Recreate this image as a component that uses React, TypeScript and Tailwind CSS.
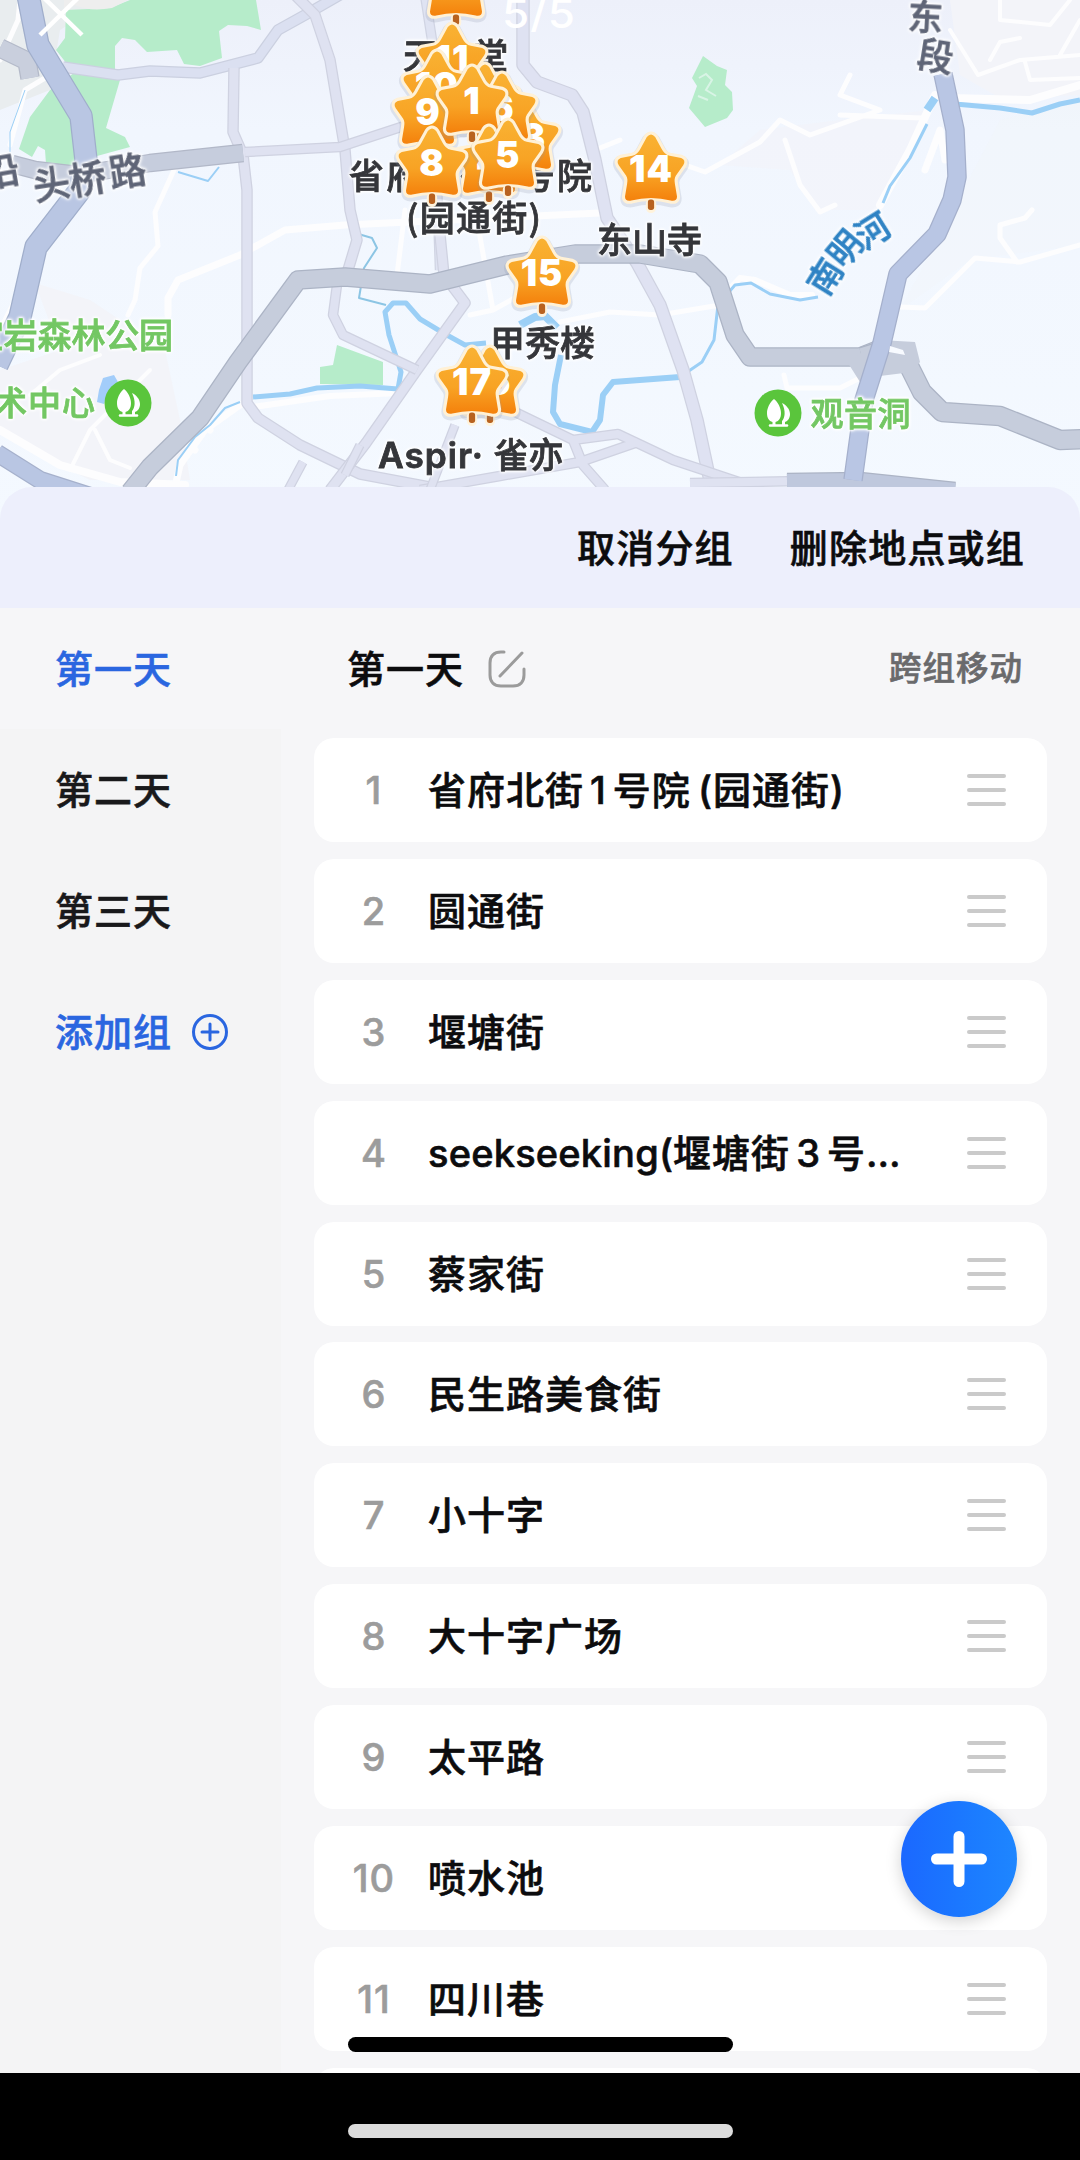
import { useState } from "react";

const days = ["第一天", "第二天", "第三天"];

const places = [
  "省府北街1号院 (园通街)",
  "圆通街",
  "堰塘街",
  "seekseeking(堰塘街3号院店)",
  "蔡家街",
  "民生路美食街",
  "小十字",
  "大十字广场",
  "太平路",
  "喷水池",
  "四川巷",
  "六广门",
];

// drawn back to front
const pins = [
  { n: 12, x: 456, y: -51 },
  { n: 11, x: 452, y: 24 },
  { n: 10, x: 437, y: 51 },
  { n: 13, x: 525, y: 102 },
  { n: 2, x: 485, y: 64 },
  { n: 6, x: 502, y: 73 },
  { n: 9, x: 428, y: 77 },
  { n: 1, x: 472, y: 66 },
  { n: 4, x: 489, y: 126 },
  { n: 5, x: 508, y: 120 },
  { n: 8, x: 432, y: 128 },
  { n: 14, x: 651, y: 134 },
  { n: 15, x: 542, y: 238 },
  { n: 16, x: 490, y: 347 },
  { n: 17, x: 472, y: 347 },
];

const STAR =
  "M-4 3Q0-2 4 3L10 14Q13 20 18 21L29 23Q34 25 31 30L24 40Q22 43 23 48L25 60Q25 65 19 64Q0 59 -19 64Q-25 65 -25 60L-23 48Q-22 43 -24 40L-31 30Q-34 25 -29 23L-18 21Q-13 20 -10 14Z";

function Pin({ n, x, y }: { n: number; x: number; y: number }) {
  return (
    <g transform={`translate(${x} ${y}) scale(1.04)`}>
      <path d={STAR} fill="#8a93a8" opacity="0.2" transform="translate(0 2)" stroke="#8a93a8" strokeWidth="9" />
      <rect x="-5" y="62" width="10" height="14" rx="5" fill="#fff3dc" />
      <path d={STAR} fill="#fff1d6" stroke="#fff1d6" strokeWidth="6" strokeLinejoin="round" />
      <path d={STAR} fill="url(#pin)" />
      <rect x="-3" y="63" width="6" height="10" rx="2.5" fill="#b8621f" />
      <text
        x="0"
        y="46"
        textAnchor="middle"
        fill="#fff"
        fontSize="35"
        fontWeight="900"
        fontFamily="Inter, sans-serif"
      >
        {n}
      </text>
    </g>
  );
}

const halo =
  "[filter:drop-shadow(0_0_1px_#fff)_drop-shadow(0_0_1px_#fff)_drop-shadow(0_0_1.5px_#fff)]";

type LabelProps = {
  x: number;
  y: number;
  w?: number;
  size?: number;
  rotate?: number;
  fill?: string;
  latin?: boolean;
  children: string;
};

function Label({ x, y, w, size = 35, rotate = 0, fill = "#35363a", latin, children }: LabelProps) {
  return (
    <text
      className={halo}
      transform={`translate(${x} ${y}) rotate(${rotate})`}
      y={size * 0.37}
      textAnchor="middle"
      textLength={w}
      lengthAdjust={latin ? "spacingAndGlyphs" : "spacing"}
      fontFamily={latin ? "Inter, sans-serif" : undefined}
      fontSize={size}
      fontWeight={latin ? "600" : "500"}
      fill={fill}
      stroke={fill}
      strokeWidth="0.8"
    >
      {children}
    </text>
  );
}

function Road({ d, w, fill, edge }: { d: string; w: number; fill: string; edge: string }) {
  return (
    <g fill="none" strokeLinejoin="round">
      <path d={d} stroke={edge} strokeWidth={w + 1.5} />
      <path d={d} stroke={fill} strokeWidth={w - 1} />
    </g>
  );
}

function ParkIcon({ x, y }: { x: number; y: number }) {
  return (
    <g transform={`translate(${x} ${y})`}>
      <circle r="23.5" fill="#5ac53c" />
      <path
        d="M-4-14C-8-11-11-5-11 0C-11 5-9 8-5.500 9V12H-2.500V9C1 8 3 5 3 0C3-5 0-11-4-14Z"
        fill="#fff"
      />
      <path d="M4-10C8-8 12-4 12 1C12 5 10 8 7 9V12H4V8C7 5 8-2 4-10Z" fill="#fff" />
      <path d="M-8 12.500H9" stroke="#fff" strokeWidth="2.500" strokeLinecap="round" />
    </g>
  );
}

function MapView() {
  return (
    <svg
      viewBox="0 0 1080 520"
      className="block h-[520px] w-[1080px] font-['Noto_Sans_CJK_SC',sans-serif]"
    >
      <defs>
        <linearGradient id="pin" x1="0" y1="0" x2="0" y2="1">
          <stop offset="0" stopColor="#f9b233" />
          <stop offset="0.6" stopColor="#f8a324" />
          <stop offset="1" stopColor="#f4810c" />
        </linearGradient>
        <linearGradient id="land" x1="0" y1="0" x2="0" y2="1">
          <stop offset="0" stopColor="#edf0fa" />
          <stop offset="0.25" stopColor="#f1f6fe" />
          <stop offset="1" stopColor="#f4f9ff" />
        </linearGradient>
      </defs>
      <rect width="1080" height="520" fill="url(#land)" />

      {/* hills */}
      <g fill="#f3f4f9">
        <path d="M0 0H110L60 30L50 90L0 110Z" fill="#e9edef" />
        <path d="M35 283L90 300L165 350L180 420L190 480H90L30 450L0 430V370L60 350Z" />
        <path d="M950 0H1080V95L1000 98L960 75Z" />
        <path d="M720 165L760 130L840 120L930 110L880 210L815 210L790 170Z" opacity="0.6" />
        <path d="M900 310L970 260L1080 245V100L1000 120Z" opacity="0.3" />
      </g>

      {/* parks */}
      <g fill="#b6ecca">
        <path d="M66 10L110 8L130 0H256L261 30L247 26L228 25L219 31L222 58L200 66L184 64L177 50L147 52L135 40L122 38L115 46V70L120 80L106 128L125 137L130 147L97 156L63 174L46 164L45 150L38 146L32 157L19 149L30 117L50 90L74 73L56 50L65 38Z" />
        <path d="M320 384V367L333 365L337 345L383 362V385Z" />
        <path d="M703 56L692 78L697 86L689 108L705 127L727 118L733 110L732 92L725 85L727 70L717 66Z" />
      </g>
      <path d="M699 78L706 74L712 80L706 90L716 96M698 96L708 100" fill="none" stroke="#d9f4e6" strokeWidth="2" />
      <path d="M64 10L75 5Q90 12 112 8L132 -2H64Z" fill="#eeeeee" />

      {/* lanes */}
      <g fill="none" stroke="#fdfdfe" strokeWidth="5" strokeLinejoin="round" strokeLinecap="round">
        <path d="M174 170L155 212L158 246L140 268L135 300L128 315" />
        <path d="M168 315V298L178 280L240 255L285 230L345 225L600 213" strokeWidth="7" />
        <path d="M0 430L60 465L120 482L185 485" strokeWidth="8" />
        <path d="M30 395L60 370L100 355M70 470L90 430L150 370M95 430L110 460L130 468" strokeWidth="4" />
        <path d="M240 405L205 430L180 465L175 487M195 415L210 430M183 440L195 450" strokeWidth="7" />
        <path d="M253 407L330 396L400 393" strokeWidth="6" />
        <path d="M0 330L30 270M10 145L25 90L50 75" />
        <path d="M405 210L397 275M477 220L493 310L470 315M493 310L520 295" />
        <path d="M560 322L610 312L660 315L720 305" />
        <path d="M595 150L620 140M685 165L705 172L760 142L780 120L810 135L880 110L840 95L850 75M785 140L800 185L820 212L835 205M840 115L922 118" />
        <path d="M880 205L910 150L935 95L950 98L1030 100L1080 85" strokeWidth="8" />
        <path d="M925 170L940 130L945 160" strokeWidth="7" />
        <path d="M900 307L925 308L975 258L1020 262L1080 245M1017 262L1000 238V225L1025 218L1032 210" />
        <path d="M727 292L740 278L755 280L790 295L812 295" strokeWidth="6" />
        <path d="M784 375L787 388L840 388L860 378" />
        <path d="M1000 0V20L1050 25L1070 0M950 30L978 75L1020 60L1080 55M1080 20L1060 55M990 60L1000 42L1020 38M1025 62L1030 80L1080 78" strokeWidth="4" />
        <path d="M0 60L18 20L20 0" />
      </g>

      {/* rivers */}
      <g fill="none" stroke="#9bcff6" strokeWidth="5" strokeLinejoin="round">
        <path d="M253 397L290 394L317 388L360 386L398 389L401 372L389 335L385 312L393 303H406L420 319L445 334L465 345L486 343" />
        <path d="M520 325L535 317L545 316L557 328" strokeWidth="8" />
        <path d="M561 355L555 385L553 412L560 424L592 432L600 420L603 395L613 382L680 377" strokeWidth="6" />
        <path d="M680 377L702 362L714 340L718 305L735 285L751 283L770 294L800 300L818 297" strokeWidth="3" />
        <path d="M883 203L890 186L910 158L927 124" strokeWidth="3" />
        <path d="M927 110L935 98" strokeWidth="8" />
        <path d="M955 104L1000 108L1032 113L1060 104L1080 100" strokeWidth="5" />
        <path d="M355 233L372 238L377 248L364 268L359 298L386 305" strokeWidth="2" stroke="#8cc5e4" />
        <path d="M178 172L208 181L219 167" strokeWidth="2" />
        <path d="M240 402L225 408L210 425L195 437L178 460L176 476" strokeWidth="2" />
        <path d="M10 152V132L25 90" strokeWidth="1" />
      </g>
      <path d="M97 402L99 390L103 378L114 375L118 382L108 392L104 404Z" fill="#a3cdfa" />

      {/* minor roads */}
      <Road d="M63 67L118 75L150 71L200 73L258 58L278 30L305 15L345 -8" w={10} fill="#dbe0f1" edge="#cbd0e0" />
      <Road d="M296 -4L315 15L330 60L345 150L350 210L357 240L348 270" w={10} fill="#dfe2f1" edge="#cfd2e1" />
      <Road d="M234 68L233 132L243 155L247 190V403L258 418L300 445L360 474L440 489" w={10} fill="#dfe2f1" edge="#cfd2e1" />
      <Road d="M245 152L340 147L404 126" w={9} fill="#dfe2f1" edge="#cfd2e1" />
      <Road d="M425 -5L432 40L440 270" w={9} fill="#dfe3f2" edge="#d0d4e3" />
      <Road d="M523 -5V65L537 82L572 95L583 112L595 160L607 218L637 263L660 305L683 370L697 420L712 490" w={12} fill="#dfe2f2" edge="#cfd2e1" />
      <Road d="M440 235L444 275L465 303L417 370L366 443L330 490" w={10} fill="#dfe2f1" edge="#cfd2e1" />
      <Road d="M337 285L333 315L343 335L417 370" w={9} fill="#dfe2f1" edge="#cfd2e1" />
      <Road d="M515 412L573 440L583 465L605 490M573 440L618 434L673 460L745 484M420 490L500 476L580 462L638 442" w={9} fill="#dfe2f1" edge="#cfd2e1" />
      <Road d="M455 425L430 490M303 462L288 490M360 445L345 475" w={8} fill="#dfe2f1" edge="#cfd2e1" />
      <Road d="M690 483L800 481" w={9} fill="#dfe2f1" edge="#cfd2e1" />

      {/* main roads */}
      <Road d="M0 48L27 61L30 78" w={18} fill="#c9cfdd" edge="#b4bac9" />
      <Road d="M12 164L35 170L78 175L150 163L243 153" w={17} fill="#c6cddd" edge="#b2b8c8" />
      <Road d="M130 492L150 467L200 418L238 362L298 280L345 277L430 284L507 265L575 254L640 254L700 264L718 282L735 335L750 357H860L885 347" w={18} fill="#c6cddc" edge="#acb4c5" />
      <Road d="M862 357L885 350L905 358L922 392L942 412L1000 416L1060 440L1085 439" w={19} fill="#c6cddc" edge="#acb4c5" />
      <path d="M848 363L880 340L915 342L920 362L912 372L880 376L860 382Z" fill="#c6cddc" />
      <Road d="M787 481L860 480L955 490" w={15} fill="#bfc8dd" edge="#acb4c5" />
      <Road d="M28 -5L38 45L81 116L86 160L80 190L36 247L20 317L-3 365" w={22} fill="#b9c6e3" edge="#a0aecb" />
      <Road d="M-3 453L40 480L90 496" w={17} fill="#b9c6e3" edge="#a6b1cc" />
      <Road d="M943 74L955 130L957 177L952 200L937 234L898 274L882 343L864 400L853 480" w={18} fill="#b9c6e4" edge="#a5b0cc" />
      <path d="M890 346L903 350L905 355L889 352Z" fill="#f7faff" />

      <Label x={2} y={172} size={36} rotate={-10} fill="#5f6577">沿</Label>
      <Label x={52} y={184} size={37} rotate={-9} fill="#5f6577">头</Label>
      <Label x={88} y={179} size={37} rotate={-9} fill="#5f6577">桥</Label>
      <Label x={128} y={171} size={37} rotate={-9} fill="#5f6577">路</Label>
      <Label x={926} y={17} size={35} rotate={3} fill="#5f6577">东</Label>
      <Label x={936} y={57} size={36} rotate={9} fill="#5f6577">段</Label>
      <Label x={825} y={276} size={34} rotate={-58} fill="#2f83c4">南</Label>
      <Label x={845} y={248} size={34} rotate={-50} fill="#2f83c4">明</Label>
      <Label x={873} y={230} size={34} rotate={-32} fill="#2f83c4">河</Label>

      <Label x={72} y={335} w={204} size={34} fill="#73c763">宝岩森林公园</Label>
      <Label x={45} y={403} w={102} size={33} fill="#73c763">术中心</Label>
      <ParkIcon x={128} y={403} />
      <ParkIcon x={778} y={413} />
      <Label x={861} y={414} w={101} size={33} fill="#73c763">观音洞</Label>

      <Label x={456} y={56} w={106}>天主堂</Label>
      <Label x={471} y={176} w={244}>省府北街1号院</Label>
      <Label x={474} y={218} w={136}>(园通街)</Label>
      <Label x={650} y={240} w={106}>东山寺</Label>
      <Label x={543} y={343} w={106}>甲秀楼</Label>
      <Label x={431} y={455} w={106} latin>Aspir·</Label>
      <Label x={529} y={455} w={71}>雀亦</Label>

      {pins.map((pin) => (
        <Pin key={pin.n} {...pin} />
      ))}

      <path d="M40 35L82 -6M82 35L40 -6" stroke="#fff" strokeWidth="4.5" />
      <text
        x="502"
        y="28"
        textLength="74"
        lengthAdjust="spacingAndGlyphs"
        fontSize="39"
        fontWeight="500"
        fill="#fff"
        fontFamily="Inter, sans-serif"
      >
        5/5
      </text>
    </svg>
  );
}

// digits between Chinese characters get a little air, latin runs and spaces less
function PlaceName({ name }: { name: string }) {
  return (
    <span className="w-[476px] truncate leading-[60px]">
      {name.split(/(\d+|[a-z(]{2,}| )/).map((part, i) => {
        if (/^\d/.test(part)) return <span key={i} className="mx-[6px]">{part}</span>;
        if (/^[a-z]/.test(part)) return <span key={i} className="tracking-[0.2px]">{part}</span>;
        if (part === " ") return <span key={i} className="tracking-[-3px]"> </span>;
        return part;
      })}
    </span>
  );
}

function DragHandle() {
  return (
    <div className="mr-[41px] flex w-[39px] shrink-0 flex-col gap-[10px]">
      <span className="h-[4px] rounded-full bg-[#cacaca]" />
      <span className="h-[4px] rounded-full bg-[#cacaca]" />
      <span className="h-[4px] rounded-full bg-[#cacaca]" />
    </div>
  );
}

export default function App() {
  const [active, setActive] = useState(0);

  return (
    <div className="relative flex h-[2160px] w-[1080px] flex-col overflow-hidden bg-[#f6f6f8] font-['Inter','Noto_Sans_CJK_SC',sans-serif] text-[38px] leading-none font-medium tracking-[1px] text-[#0c0c0e] [-webkit-text-stroke:0.6px_currentColor]">
      <section className="h-[487px] shrink-0 [-webkit-text-stroke:0]">
        <MapView />
      </section>

      <header className="relative flex h-[121px] shrink-0 items-center justify-end gap-[56px] rounded-t-[32px] bg-[#edeffc] pr-[55px] tracking-[1.2px]">
        <button>取消分组</button>
        <button>删除地点或组</button>
      </header>

      <div className="flex h-[1465px] shrink-0 overflow-hidden">
        <nav className="flex w-[281px] shrink-0 flex-col bg-[#f4f4f5]">
          {days.map((day, i) => (
            <button
              key={day}
              onClick={() => setActive(i)}
              className={
                i === active
                  ? "flex h-[121px] items-center bg-[#f6f6f8] pl-[55px] text-[#2a66e0]"
                  : "flex h-[121px] items-center pl-[55px] text-[#19191b]"
              }
            >
              {day}
            </button>
          ))}
          <button className="flex h-[121px] items-center gap-[19px] pl-[55px] text-[#2a66e0]">
            添加组
            <svg viewBox="0 0 38 38" className="size-[38px]" fill="none" stroke="currentColor" strokeWidth="3">
              <circle cx="19" cy="19" r="16.5" />
              <path d="M11 19H27M19 11V27" strokeLinecap="round" />
            </svg>
          </button>
        </nav>

        <main className="flex grow flex-col pr-[33px] pl-[33px]">
          <div className="mb-[9px] flex h-[121px] shrink-0 items-center pr-[24px] pl-[33px]">
            <h2>{days[active]}</h2>
            <svg
              viewBox="0 0 40 40"
              className="ml-[23px] size-[40px]"
              fill="none"
              stroke="#9b9b9b"
              strokeWidth="3"
              strokeLinecap="round"
            >
              <path d="M17 3H14C7 3 3 7 3 14V26C3 33 7 37 14 37H26C33 37 37 33 37 26V20" />
              <path d="M13 27L35 4" />
            </svg>
            <button className="mt-[2px] ml-auto text-[32.5px] text-[#6a6a6c]">跨组移动</button>
          </div>

          <ul className="flex flex-col gap-[16.9px]">
            {places.map((place, i) => (
              <li key={place} className="flex h-[104px] shrink-0 items-center rounded-[20px] bg-white">
                <span className="mr-[10px] ml-[16px] w-[88px] shrink-0 text-center text-[#9c9c9c]">{i + 1}</span>
                <PlaceName name={place} />
                <span className="grow" />
                <DragHandle />
              </li>
            ))}
          </ul>
        </main>
      </div>

      <footer className="flex h-[87px] shrink-0 justify-center bg-black pt-[51px]">
        <div className="h-[14px] w-[385px] rounded-full bg-[#dcdcdc]" />
      </footer>

      <div className="absolute top-[2037px] left-[348px] h-[15px] w-[385px] rounded-full bg-black" />
      <button className="absolute top-[1801px] left-[901px] flex size-[116px] items-center justify-center rounded-full bg-linear-to-r from-[#1b68ff] to-[#1e86ff] shadow-[0_4px_16px_rgba(0,0,0,0.18)]">
        <svg viewBox="0 0 56 56" className="size-[56px]" stroke="#fff" strokeWidth="11" strokeLinecap="round">
          <path d="M5.500 28H50.500M28 5.500V50.500" />
        </svg>
      </button>
    </div>
  );
}
